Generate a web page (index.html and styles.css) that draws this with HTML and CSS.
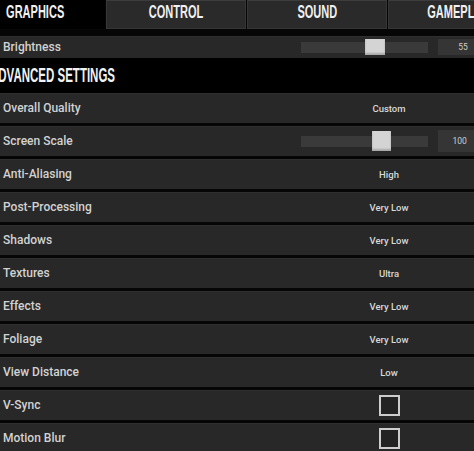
FILE: index.html
```html
<!DOCTYPE html>
<html>
<head>
<meta charset="utf-8">
<link rel="stylesheet" href="styles.css">
</head>
<body>
<div class="screen">
  <div class="tabs">
    <div class="tab active"><span>GRAPHICS</span></div>
    <div class="tab"><span>CONTROL</span></div>
    <div class="tab"><span>SOUND</span></div>
    <div class="tab"><span>GAMEPLAY</span></div>
  </div>
  <div class="row row-short">
    <div class="label">Brightness</div>
    <div class="slider">
      <div class="track"><div class="thumb thumb-b"></div></div>
      <div class="valbox">55</div>
    </div>
  </div>
  <div class="section"><span>ADVANCED SETTINGS</span></div>
  <div class="list">
    <div class="row"><div class="label">Overall Quality</div><div class="value">Custom</div></div>
    <div class="row">
      <div class="label">Screen Scale</div>
      <div class="slider">
        <div class="track"><div class="thumb thumb-s"></div></div>
        <div class="valbox big">100</div>
      </div>
    </div>
    <div class="row"><div class="label">Anti-Aliasing</div><div class="value">High</div></div>
    <div class="row"><div class="label">Post-Processing</div><div class="value">Very Low</div></div>
    <div class="row"><div class="label">Shadows</div><div class="value">Very Low</div></div>
    <div class="row"><div class="label">Textures</div><div class="value">Ultra</div></div>
    <div class="row"><div class="label">Effects</div><div class="value">Very Low</div></div>
    <div class="row"><div class="label">Foliage</div><div class="value">Very Low</div></div>
    <div class="row"><div class="label">View Distance</div><div class="value">Low</div></div>
    <div class="row"><div class="label">V-Sync</div><div class="value"><div class="check"></div></div></div>
    <div class="row"><div class="label">Motion Blur</div><div class="value"><div class="check"></div></div></div>
  </div>
</div>
</body>
</html>
```
FILE: styles.css
```css
html, body {
  margin: 0;
  padding: 0;
  background: #050505;
}
.screen {
  width: 474px;
  height: 451px;
  overflow: hidden;
  background: #060606;
  font-family: Roboto, "Liberation Sans", sans-serif;
  color: #dcdcdc;
}
.tabs {
  display: flex;
  gap: 1px;
  margin-left: -35px;
  height: 29px;
  margin-bottom: 7px;
}
.tab {
  flex: 0 0 140px;
  height: 29px;
  box-sizing: border-box;
  background: #2a2a2a;
  border: 1px solid #363636;
  border-top-color: #3c3c3c;
  display: flex;
  align-items: center;
  justify-content: center;
  padding-bottom: 5px;
  font-family: "Liberation Sans", sans-serif;
  font-weight: bold;
  font-size: 19px;
  color: #f0f0f0;
}
.tab span {
  display: inline-block;
  transform: scaleX(0.58);
  white-space: nowrap;
}
.tab.active {
  background: #000;
  border-color: #000;
}
.row {
  display: grid;
  grid-template-columns: 301px 176px;
  align-items: center;
  height: 30px;
  margin-bottom: 3px;
  background: #282828;
  box-shadow: inset 0 1px 0 #2f2f2f;
}
.row-short {
  height: 22px;
  margin-bottom: 0;
}
.label {
  padding-left: 3px;
  font-size: 12px;
  font-weight: 500;
  color: #d2d2d2;
}
.value {
  display: flex;
  justify-content: center;
  align-items: center;
  font-size: 9.5px;
  font-weight: 500;
  color: #d8d8d8;
}
.section {
  height: 35px;
  display: flex;
  align-items: center;
  background: #000;
  font-family: "Liberation Sans", sans-serif;
  font-weight: bold;
  font-size: 20px;
  color: #f2f2f2;
  overflow: hidden;
}
.section span {
  display: inline-block;
  white-space: nowrap;
  transform: scaleX(0.575);
  transform-origin: left center;
  margin-left: -10px;
}
.slider {
  display: flex;
  align-items: center;
  gap: 10px;
}
.track {
  position: relative;
  width: 135px;
  height: 11px;
  background: #3a3a3a;
}
.thumb {
  position: absolute;
  top: 50%;
  background: #d4d4d4;
  box-shadow: inset 0 -2px 2px #a8a8a8;
}
.thumb-b {
  left: 64px;
  width: 20px;
  height: 16px;
  margin-top: -8px;
}
.thumb-s {
  left: 71px;
  width: 19px;
  height: 20px;
  margin-top: -10px;
}
.valbox {
  width: 40px;
  height: 16px;
  background: #353535;
  font-size: 8.5px;
  color: #cfcfcf;
  display: flex;
  align-items: center;
  padding-left: 20px;
  box-sizing: border-box;
}
.valbox.big {
  height: 22px;
  padding-left: 14px;
}
.check {
  width: 21px;
  height: 21px;
  box-sizing: border-box;
  border: 2px solid #cdcdcd;
  background: #232323;
}
```
